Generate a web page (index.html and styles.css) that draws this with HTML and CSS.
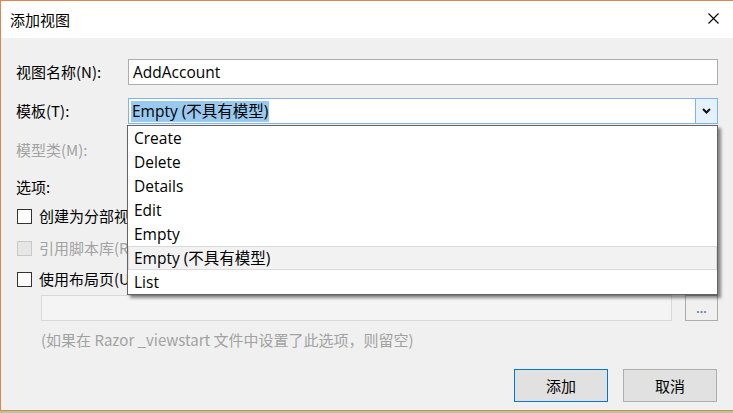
FILE: index.html
```html
<!DOCTYPE html>
<html lang="zh-CN">
<head>
<meta charset="utf-8">
<title>添加视图</title>
<link rel="stylesheet" href="styles.css">
</head>
<body>
<div class="window">
  <div class="titlebar">
    <span class="title">添加视图</span>
    <svg class="close" width="11" height="11" viewBox="0 0 11 11"><path d="M0.5 0.5 L10.5 10.5 M10.5 0.5 L0.5 10.5" stroke="#000" stroke-width="1.1" fill="none"/></svg>
  </div>
  <div class="content">
    <div class="field row1">
      <span class="label">视图名称(N):</span>
      <div class="textbox"><span class="value">AddAccount</span></div>
    </div>
    <div class="field row2">
      <span class="label">模板(T):</span>
      <div class="combo">
        <span class="combo-text"><span class="sel">Empty (不具有模型)</span></span>
        <span class="combo-btn"><svg width="9" height="6" viewBox="0 0 9 6"><path d="M1 1 L4.5 4.5 L8 1" stroke="#111" stroke-width="2" fill="none"/></svg></span>
        <ul class="dropdown">
          <li>Create</li>
          <li>Delete</li>
          <li>Details</li>
          <li>Edit</li>
          <li>Empty</li>
          <li class="hover">Empty (不具有模型)</li>
          <li>List</li>
        </ul>
      </div>
    </div>
    <div class="field row3">
      <span class="label disabled">模型类(M):</span>
    </div>
    <div class="field row4">
      <span class="label">选项:</span>
    </div>
    <div class="check c1"><span class="box"></span><span class="ctext">创建为分部视图(C)</span></div>
    <div class="check c2"><span class="box off"></span><span class="ctext disabled">引用脚本库(R)</span></div>
    <div class="check c3"><span class="box"></span><span class="ctext">使用布局页(U):</span></div>
    <div class="layout-row">
      <div class="layout-input"></div>
      <div class="browse">...</div>
    </div>
    <div class="hint">(如果在 Razor _viewstart 文件中设置了此选项，则留空)</div>
    <div class="buttons">
      <div class="btn primary">添加</div>
      <div class="btn">取消</div>
    </div>
  </div>
</div>
</body>
</html>
```

FILE: styles.css
```css
html, body {
  margin: 0;
  padding: 0;
  background: #a9cb9f;
}
body {
  width: 733px;
  height: 413px;
  overflow: hidden;
}
.window {
  width: 733px;
  height: 411px;
  box-sizing: border-box;
  border-top: 1px solid #e0834d;
  border-left: 1px solid #e0834d;
  border-bottom: 1px solid #e0834d;
  background: #f0f0f0;
  font-family: "Microsoft YaHei", "Noto Sans CJK SC", sans-serif;
  font-size: 15px;
  color: #000;
  display: flex;
  flex-direction: column;
}
.titlebar {
  height: 37px;
  background: #fff;
  display: flex;
  align-items: center;
  justify-content: space-between;
  padding: 0 14px 0 9px;
}
.title {
  font-size: 15px;
  line-height: 20px;
  margin-top: 1px;
}
.close {
  display: block;
  margin-top: -3px;
}
.content {
  padding: 21px 15px 0 15px;
  display: flex;
  flex-direction: column;
}
.field {
  display: flex;
  align-items: center;
  height: 26px;
}
.row2, .row3 { margin-top: 13px; }
.row4 { margin-top: 11px; }
.label {
  width: 112px;
  flex: none;
  line-height: 20px;
}
.disabled { color: #a2a2a2; }
.textbox {
  flex: 1;
  height: 26px;
  box-sizing: border-box;
  border: 1px solid #acacac;
  background: #fff;
  display: flex;
  align-items: center;
  padding-left: 4px;
}
.value, .combo-text, .dropdown li {
  font-family: "Segoe UI", "Open Sans", "Noto Sans CJK SC", sans-serif;
  font-size: 15.5px;
}
.combo {
  flex: 1;
  height: 26px;
  box-sizing: border-box;
  border: 1px solid #7eb4ea;
  background: #fff;
  display: flex;
  align-items: stretch;
  position: relative;
}
.combo-text {
  flex: 1;
  display: flex;
  align-items: center;
  padding-left: 2px;
}
.sel {
  background: #99c9ef;
  line-height: 21px;
  padding: 0 1px;
}
.combo-btn {
  width: 21px;
  background: #e5f1fb;
  border-left: 1px solid #7eb4ea;
  display: flex;
  align-items: center;
  justify-content: center;
}
.dropdown {
  position: absolute;
  top: 26px;
  left: -2px;
  right: -1px;
  margin: 0;
  padding: 0;
  list-style: none;
  background: #fff;
  border: 1px solid #646464;
  box-shadow: 3px 3px 3px rgba(0, 0, 0, 0.45);
  z-index: 5;
}
.dropdown li {
  height: 24px;
  line-height: 24px;
  padding-left: 6px;
  box-sizing: border-box;
}
.dropdown li.hover {
  background: #f2f2f2;
  border: 1px solid #dadada;
  line-height: 22px;
  padding-left: 5px;
}
.check {
  display: flex;
  align-items: center;
  height: 24px;
  padding-left: 1px;
}
.c1 { margin-top: 4px; }
.c2 { margin-top: 8px; }
.c3 { margin-top: 7px; }
.box {
  width: 15px;
  height: 15px;
  box-sizing: border-box;
  border: 1px solid #333;
  background: #fff;
  flex: none;
}
.box.off {
  border-color: #c8c8c8;
  background: #e6e6e6;
}
.ctext {
  margin-left: 7px;
  line-height: 20px;
  white-space: nowrap;
}
.layout-row {
  display: flex;
  margin-top: 4px;
  padding-left: 25px;
  height: 26px;
}
.layout-input {
  width: 631px;
  box-sizing: border-box;
  border: 1px solid #d9d9d9;
  background: #f4f4f4;
}
.browse {
  margin-left: 13px;
  width: 33px;
  box-sizing: border-box;
  border: 1px solid #adadad;
  background: #f0f0f0;
  color: #6d8196;
  font-family: "Segoe UI", "Open Sans", sans-serif;
  font-size: 12px;
  line-height: 26px;
  text-align: center;
  font-weight: bold;
}
.hint {
  margin-top: 8px;
  padding-left: 25px;
  height: 22px;
  line-height: 22px;
  color: #a2a2a2;
  white-space: nowrap;
}
.buttons {
  margin-top: 18px;
  display: flex;
  justify-content: flex-end;
  gap: 15px;
  padding-right: 1px;
}
.btn {
  width: 94px;
  height: 33px;
  box-sizing: border-box;
  border: 1px solid #adadad;
  background: #e1e1e1;
  display: flex;
  align-items: center;
  justify-content: center;
  font-size: 15px;
}
.btn.primary {
  border-color: #0078d7;
}
```
